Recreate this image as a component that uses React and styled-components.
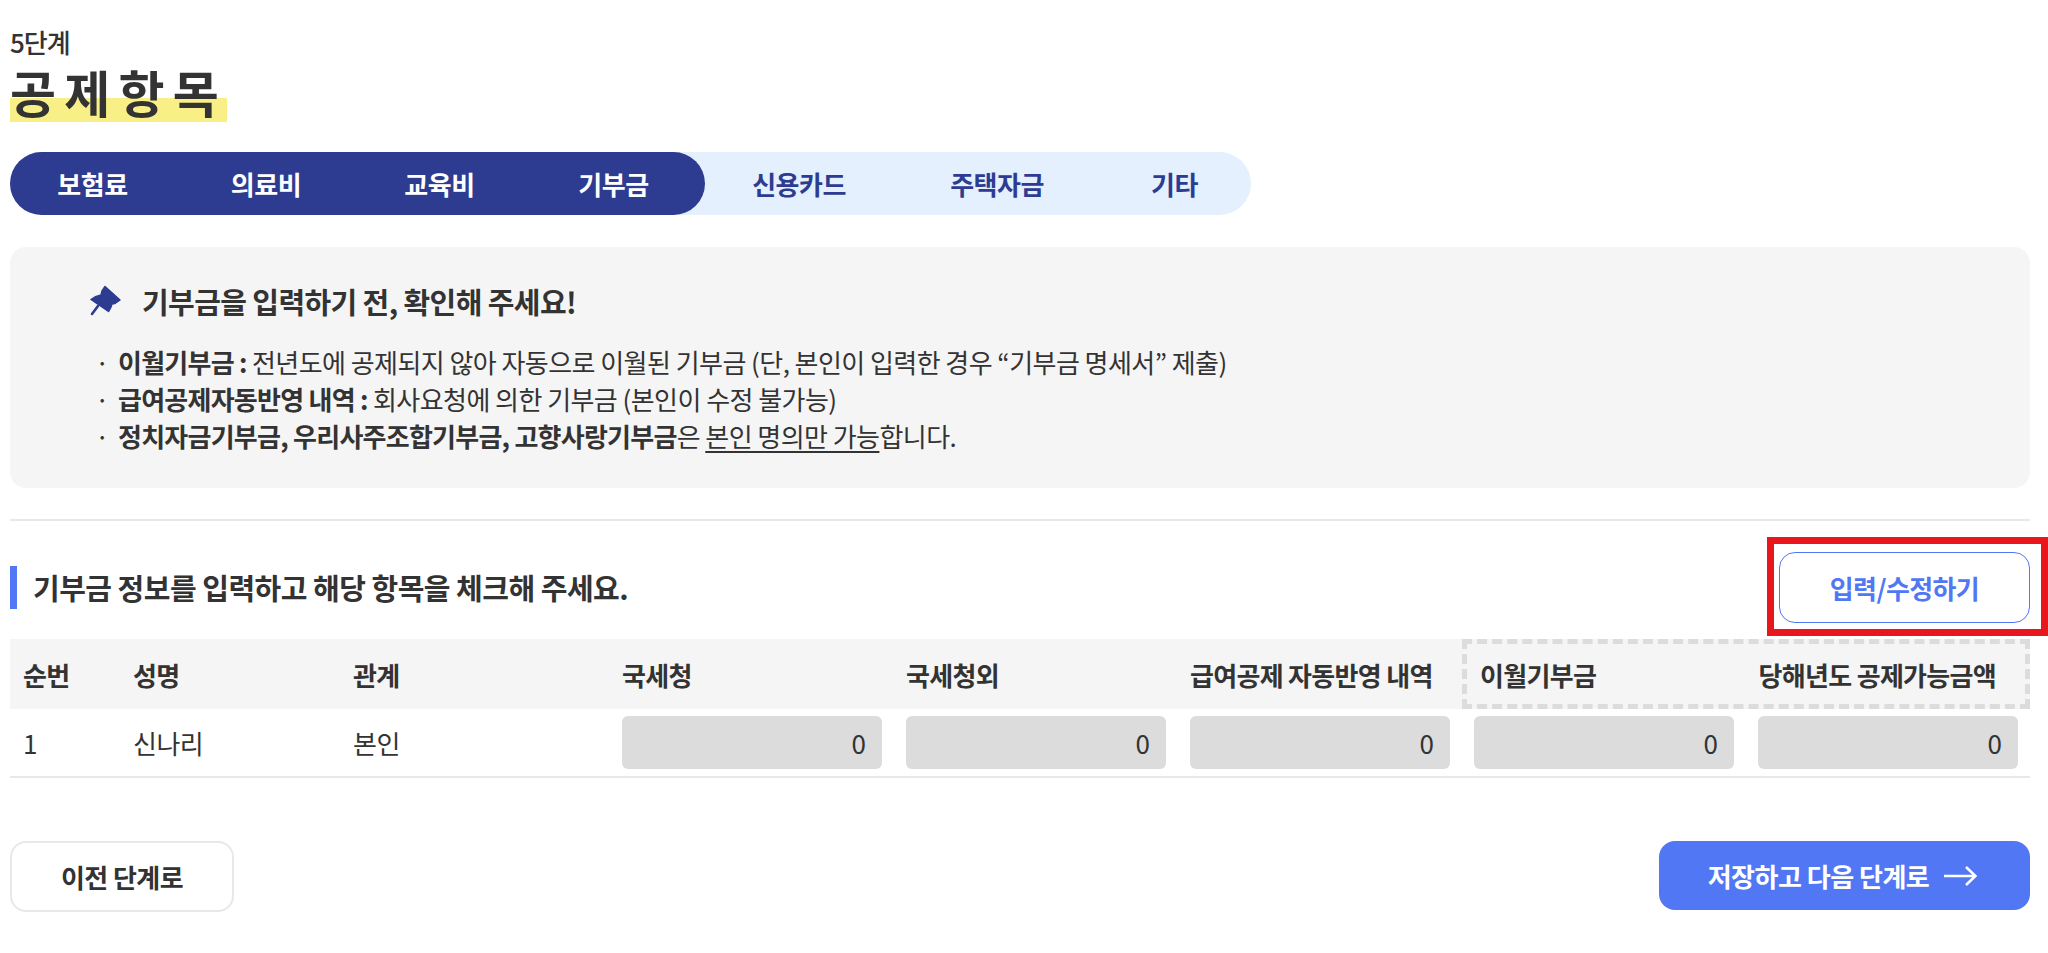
import React from "react";
import styled, { createGlobalStyle } from "styled-components";

const GlobalStyle = createGlobalStyle`
  body {
    margin: 0;
    background: #fff;
    color: #333;
    font-family: "Noto Sans CJK KR", "Noto Sans", sans-serif;
  }
`;

const Page = styled.div`
  padding: 26px 18px 41px 10px;
`;

const StepLabel = styled.div`
  font-size: 26px;
  line-height: 32px;
  font-weight: 500;
  letter-spacing: -1px;
`;

const Title = styled.h1`
  display: inline-block;
  margin: 2px 0 0;
  height: 62px;
  font-size: 50px;
  line-height: 62px;
  font-weight: 700;
  letter-spacing: 8.25px;
  background: linear-gradient(#f8f086, #f8f086) no-repeat 0 bottom / 100% 24px;
`;

const TabBar = styled.div`
  display: flex;
  width: 1241px;
  height: 63px;
  margin-top: 30px;
  background: #e4f0fe;
  border-radius: 32px;
`;

const Tab = styled.div`
  display: flex;
  align-items: center;
  justify-content: center;
  box-sizing: border-box;
  width: ${(p) => p.$width}px;
  padding-right: 8px;
  font-size: 26px;
  font-weight: 700;
  letter-spacing: -0.5px;
  color: ${(p) => (p.$active ? "#fff" : "#2d3c91")};
  background: ${(p) => (p.$active ? "#2d3c91" : "transparent")};
  border-radius: ${(p) => (p.$first ? "32px 0 0 32px" : p.$last ? "0 32px 32px 0" : "0")};
  &:last-child {
    padding-right: 3px;
  }
`;

const Notice = styled.div`
  box-sizing: border-box;
  height: 241px;
  margin-top: 32px;
  padding: 32px 81px;
  background: #f5f5f5;
  border-radius: 16px;
`;

const NoticeTitle = styled.div`
  display: flex;
  align-items: center;
  gap: 20px;
  margin-left: -1px;
  font-size: 29px;
  line-height: 44px;
  font-weight: 600;
  letter-spacing: -0.6px;
`;

const NoticeList = styled.ul`
  margin: 20px 0 0;
  padding: 0;
  list-style: none;
`;

const NoticeItem = styled.li`
  position: relative;
  padding-left: 27px;
  font-size: 26px;
  line-height: 37px;
  letter-spacing: -0.55px;
  &::before {
    content: "·";
    position: absolute;
    left: 4px;
  }
  b {
    font-weight: 600;
    letter-spacing: -0.75px;
  }
  u {
    text-underline-offset: 4px;
  }
`;

const Divider = styled.hr`
  height: 2px;
  margin: 31px 0 0;
  border: 0;
  background: #e8e8e8;
`;

const SectionRow = styled.div`
  display: flex;
  align-items: center;
  justify-content: space-between;
  height: 70px;
  margin-top: 31px;
`;

const SectionTitle = styled.h2`
  margin: 0;
  padding-left: 16px;
  border-left: 7px solid #5277f5;
  font-size: 29px;
  line-height: 43px;
  font-weight: 600;
  letter-spacing: -0.5px;
`;

const Marked = styled.div`
  position: relative;
  &::after {
    content: "";
    position: absolute;
    inset: -15px -18px -13px -12px;
    border: 7px solid #e8171b;
    pointer-events: none;
  }
`;

const OutlineButton = styled.button`
  display: block;
  width: 251px;
  height: 71px;
  padding: 0;
  background: #fff;
  border: 1.5px solid #5277f5;
  border-radius: 16px;
  font: 600 26px "Noto Sans CJK KR", sans-serif;
  letter-spacing: -0.6px;
  color: #5277f5;
`;

const Table = styled.div`
  margin-top: 17px;
`;

const HeadRow = styled.div`
  display: grid;
  grid-template-columns: 110px 220px 269px repeat(3, 284px) 1fr;
  height: 70px;
  background: #f5f5f5;
`;

const HeadCell = styled.div`
  display: flex;
  align-items: center;
  padding-left: 13px;
  font-size: 26px;
  font-weight: 600;
  letter-spacing: -0.7px;
  white-space: nowrap;
`;

const DashedGroup = styled.div`
  display: flex;
  align-items: center;
  justify-content: space-between;
  margin-left: 1px;
  padding: 0 29px 0 13px;
  border: 5px dashed #dcdcdc;
  font-size: 26px;
  font-weight: 600;
  letter-spacing: -0.7px;
  white-space: nowrap;
`;

const BodyRow = styled.div`
  display: grid;
  grid-template-columns: 110px 220px 269px repeat(5, 284px);
  align-items: center;
  height: 67px;
  border-bottom: 2px solid #e8e8e8;
`;

const BodyCell = styled.div`
  padding: 0 11px 0 13px;
  font-size: 26px;
  letter-spacing: -0.5px;
`;

const AmountInput = styled.input`
  display: block;
  box-sizing: border-box;
  width: 100%;
  height: 53px;
  padding: 0 16px;
  background: #dcdcdc;
  border: 0;
  border-radius: 6px;
  font: 400 26px "Noto Sans CJK KR", sans-serif;
  color: #333;
  text-align: right;
`;

const Footer = styled.div`
  display: flex;
  justify-content: space-between;
  margin-top: 63px;
`;

const PrevButton = styled.button`
  width: 224px;
  height: 71px;
  padding: 0;
  background: #fff;
  border: 2px solid #e8e8e8;
  border-radius: 16px;
  font: 600 26px "Noto Sans CJK KR", sans-serif;
  letter-spacing: -0.6px;
  color: #333;
`;

const NextButton = styled.button`
  display: flex;
  align-items: center;
  justify-content: center;
  gap: 14px;
  width: 371px;
  height: 69px;
  padding: 0 4px 0 0;
  background: #5277f5;
  border: 0;
  border-radius: 16px;
  font: 600 26px "Noto Sans CJK KR", sans-serif;
  letter-spacing: -0.5px;
  color: #fff;
`;

const PinIcon = () => (
  <svg width="32" height="32" viewBox="0 0 32 32" fill="#2d3c91" stroke="#2d3c91" strokeLinejoin="round">
    <path strokeWidth="1.5" d="M15 1.5 30 15l-5 3.5-3 .5q-1 4-3.5 7.5L1 14.5Q5 11 11 10l1-4z" />
    <path strokeWidth="2.6" strokeLinecap="round" d="M8 21 2 29" />
  </svg>
);

const ArrowIcon = () => (
  <svg width="34" height="22" viewBox="0 0 34 22" fill="none" stroke="#fff" strokeWidth="2.6">
    <path d="M1 11h31M23 2l9.5 9L23 20" />
  </svg>
);

const TABS = [
  { label: "보험료", width: 173, active: true, first: true },
  { label: "의료비", width: 174, active: true },
  { label: "교육비", width: 173, active: true },
  { label: "기부금", width: 175, active: true, last: true },
  { label: "신용카드", width: 196 },
  { label: "주택자금", width: 200 },
  { label: "기타", width: 150 },
];

const AMOUNTS = ["국세청", "국세청외", "급여공제", "이월기부금", "당해년도"];

export default function App() {
  return (
    <Page>
      <GlobalStyle />
      <StepLabel>5단계</StepLabel>
      <Title>공제항목</Title>

      <TabBar>
        {TABS.map((t) => (
          <Tab key={t.label} $width={t.width} $active={t.active} $first={t.first} $last={t.last}>
            {t.label}
          </Tab>
        ))}
      </TabBar>

      <Notice>
        <NoticeTitle>
          <PinIcon />
          기부금을 입력하기 전, 확인해 주세요!
        </NoticeTitle>
        <NoticeList>
          <NoticeItem>
            <b>이월기부금 :</b> 전년도에 공제되지 않아 자동으로 이월된 기부금 (단, 본인이 입력한 경우 “기부금 명세서” 제출)
          </NoticeItem>
          <NoticeItem>
            <b>급여공제자동반영 내역 :</b> 회사요청에 의한 기부금 (본인이 수정 불가능)
          </NoticeItem>
          <NoticeItem>
            <b>정치자금기부금, 우리사주조합기부금, 고향사랑기부금</b>은 <u>본인 명의만 가능</u>합니다.
          </NoticeItem>
        </NoticeList>
      </Notice>

      <Divider />

      <SectionRow>
        <SectionTitle>기부금 정보를 입력하고 해당 항목을 체크해 주세요.</SectionTitle>
        <Marked>
          <OutlineButton>입력/수정하기</OutlineButton>
        </Marked>
      </SectionRow>

      <Table>
        <HeadRow>
          <HeadCell>순번</HeadCell>
          <HeadCell>성명</HeadCell>
          <HeadCell>관계</HeadCell>
          <HeadCell>국세청</HeadCell>
          <HeadCell>국세청외</HeadCell>
          <HeadCell>급여공제 자동반영 내역</HeadCell>
          <DashedGroup>
            <span>이월기부금</span>
            <span>당해년도 공제가능금액</span>
          </DashedGroup>
        </HeadRow>
        <BodyRow>
          <BodyCell>1</BodyCell>
          <BodyCell>신나리</BodyCell>
          <BodyCell>본인</BodyCell>
          {AMOUNTS.map((name) => (
            <BodyCell key={name}>
              <AmountInput readOnly value="0" aria-label={name} />
            </BodyCell>
          ))}
        </BodyRow>
      </Table>

      <Footer>
        <PrevButton>이전 단계로</PrevButton>
        <NextButton>
          저장하고 다음 단계로
          <ArrowIcon />
        </NextButton>
      </Footer>
    </Page>
  );
}
